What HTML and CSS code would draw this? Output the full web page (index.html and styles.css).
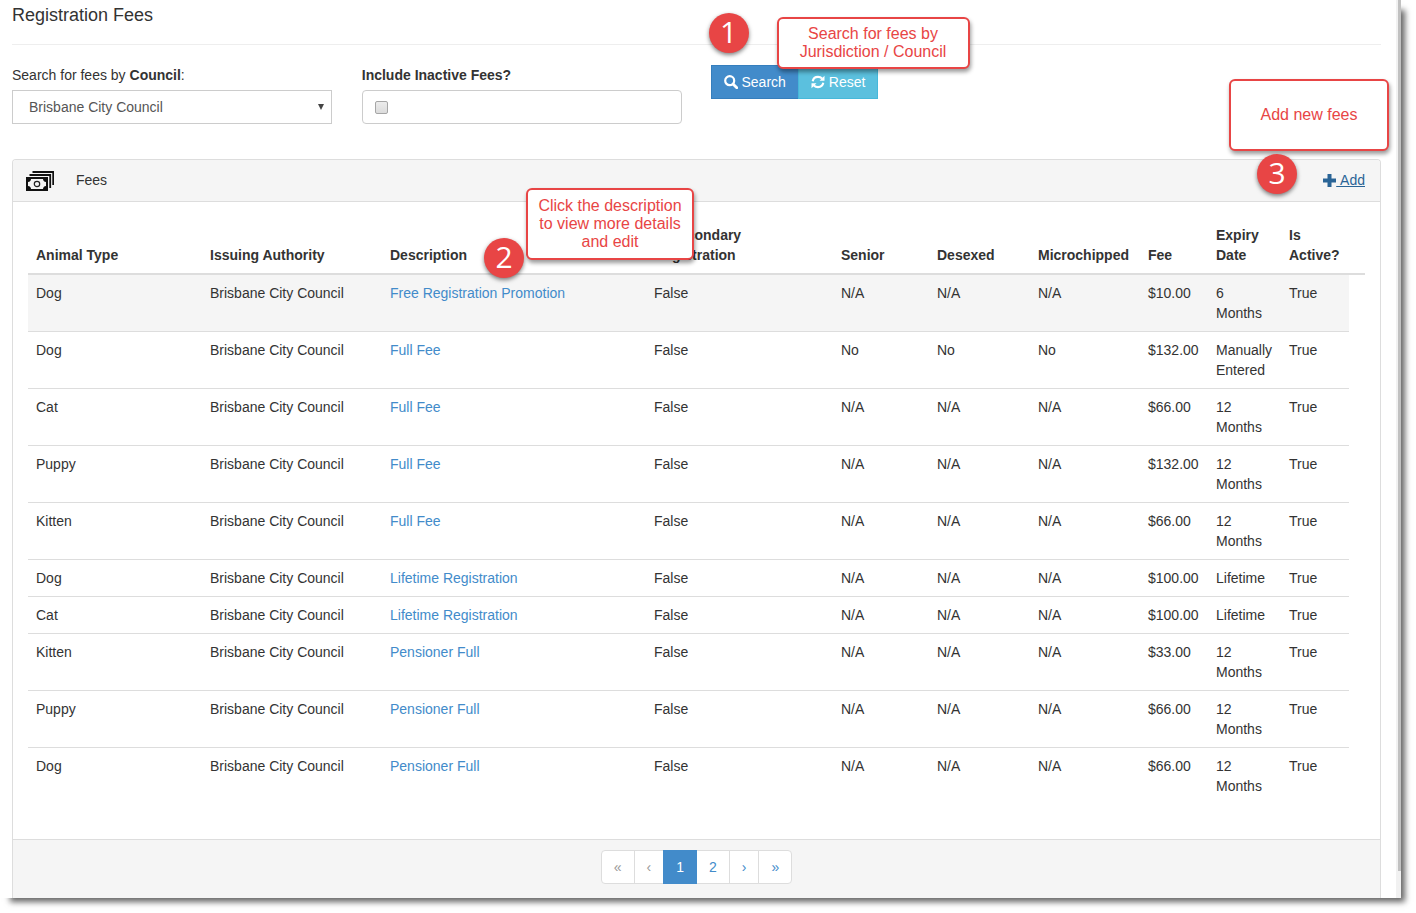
FILE: index.html
```html
<!DOCTYPE html>
<html lang="en">
<head>
<meta charset="utf-8">
<title>Registration Fees</title>
<link rel="stylesheet" href="styles.css">
</head>
<body>
<div class="frame">
  <main class="content">
    <h1 class="title">Registration Fees</h1>
    <form class="filters">
      <div class="field">
        <label class="field-label" for="council">Search for fees by <b>Council</b>:</label>
        <div class="select-wrap">
          <select class="select" id="council"><option>Brisbane City Council</option></select>
          <svg class="select-arrow" width="6" height="6" viewBox="0 0 6 6" aria-hidden="true"><path d="M0 0h6L3 6z" fill="#444"/></svg>
        </div>
      </div>
      <div class="field">
        <label class="field-label" for="inactive"><b>Include Inactive Fees?</b></label>
        <div class="check-box"><input class="check" type="checkbox" id="inactive"></div>
      </div>
      <div class="actions">
        <button class="btn btn-search" type="button"><svg class="btn-icon" width="14" height="14" viewBox="0 0 14 14" aria-hidden="true"><circle cx="5.7" cy="5.7" r="4.5" fill="none" stroke="#fff" stroke-width="2.2"/><path d="M9 9l3.8 3.8" stroke="#fff" stroke-width="2.8" stroke-linecap="round"/></svg>Search</button>
        <button class="btn btn-reset" type="button"><svg class="btn-icon" width="14" height="14" viewBox="0 0 14 14" aria-hidden="true"><path d="M1.7 6.2C2.2 3.6 4.3 1.9 7 1.9c1.7 0 3 .6 4.1 1.7M12.3 7.8c-.5 2.6-2.6 4.3-5.3 4.3-1.7 0-3-.6-4.1-1.7" fill="none" stroke="#fff" stroke-width="2.1"/><path d="M13.5.8v5h-5zM.5 13.2v-5h5z" fill="#fff"/></svg>Reset</button>
        <span class="badge badge-search">1</span>
        <div class="callout callout-search">Search for fees by<br>Jurisdiction / Council</div>
      </div>
    </form>

    <section class="panel">
      <header class="panel-head">
        <svg class="money" width="28" height="20" viewBox="0 0 28 20" aria-hidden="true">
          <path d="M6.5 1h20.7v13M3.500 4h20.700v13" fill="none" stroke="#111" stroke-width="1.8"/>
          <path d="M0 6h22v14H0z" fill="#111"/>
          <path d="M5 8h12c0 1.600 1 2.800 3 3v4c-2 .2-3 1.400-3 3H5c0-1.600-1-2.800-3-3v-4c2-.2 3-1.400 3-3z" fill="#f5f5f5"/>
          <circle cx="11" cy="13" r="2.700" fill="none" stroke="#222" stroke-width="1.200"/>
        </svg>
        <span class="panel-title">Fees</span>
        <a class="add" href="#"><svg class="plus" width="13" height="13" viewBox="0 0 13 13" aria-hidden="true"><path d="M4.500 0h4v4.500H13v4H8.500V13h-4V8.500H0v-4h4.500z" fill="#2a6496"/></svg><span class="add-text">&nbsp;Add</span></a>
        <span class="badge badge-add">3</span>
        <div class="callout callout-add">Add new fees</div>
      </header>
      <div class="panel-body">
        <table class="fees">
          <colgroup><col class="c-animal"><col class="c-authority"><col class="c-desc"><col class="c-secondary"><col class="c-senior"><col class="c-desexed"><col class="c-chip"><col class="c-fee"><col class="c-expiry"><col class="c-active"><col class="c-gutter"></colgroup>
          <thead>
            <tr><th>Animal Type</th><th>Issuing Authority</th><th class="th-desc">Description<span class="badge badge-desc">2</span><div class="callout callout-desc">Click the description<br>to view more details<br>and edit</div></th><th>Is Secondary<br>Registration</th><th>Senior</th><th>Desexed</th><th>Microchipped</th><th>Fee</th><th>Expiry Date</th><th>Is Active?</th><td class="gutter"></td></tr>
          </thead>
          <tbody>
            <tr class="hovered"><td>Dog</td><td>Brisbane City Council</td><td><a href="#">Free Registration Promotion</a></td><td>False</td><td>N/A</td><td>N/A</td><td>N/A</td><td>$10.00</td><td>6<br>Months</td><td>True</td></tr>
            <tr><td>Dog</td><td>Brisbane City Council</td><td><a href="#">Full Fee</a></td><td>False</td><td>No</td><td>No</td><td>No</td><td>$132.00</td><td>Manually Entered</td><td>True</td></tr>
            <tr><td>Cat</td><td>Brisbane City Council</td><td><a href="#">Full Fee</a></td><td>False</td><td>N/A</td><td>N/A</td><td>N/A</td><td>$66.00</td><td>12<br>Months</td><td>True</td></tr>
            <tr><td>Puppy</td><td>Brisbane City Council</td><td><a href="#">Full Fee</a></td><td>False</td><td>N/A</td><td>N/A</td><td>N/A</td><td>$132.00</td><td>12<br>Months</td><td>True</td></tr>
            <tr><td>Kitten</td><td>Brisbane City Council</td><td><a href="#">Full Fee</a></td><td>False</td><td>N/A</td><td>N/A</td><td>N/A</td><td>$66.00</td><td>12<br>Months</td><td>True</td></tr>
            <tr><td>Dog</td><td>Brisbane City Council</td><td><a href="#">Lifetime Registration</a></td><td>False</td><td>N/A</td><td>N/A</td><td>N/A</td><td>$100.00</td><td>Lifetime</td><td>True</td></tr>
            <tr><td>Cat</td><td>Brisbane City Council</td><td><a href="#">Lifetime Registration</a></td><td>False</td><td>N/A</td><td>N/A</td><td>N/A</td><td>$100.00</td><td>Lifetime</td><td>True</td></tr>
            <tr><td>Kitten</td><td>Brisbane City Council</td><td><a href="#">Pensioner Full</a></td><td>False</td><td>N/A</td><td>N/A</td><td>N/A</td><td>$33.00</td><td>12<br>Months</td><td>True</td></tr>
            <tr><td>Puppy</td><td>Brisbane City Council</td><td><a href="#">Pensioner Full</a></td><td>False</td><td>N/A</td><td>N/A</td><td>N/A</td><td>$66.00</td><td>12<br>Months</td><td>True</td></tr>
            <tr><td>Dog</td><td>Brisbane City Council</td><td><a href="#">Pensioner Full</a></td><td>False</td><td>N/A</td><td>N/A</td><td>N/A</td><td>$66.00</td><td>12<br>Months</td><td>True</td></tr>
          </tbody>
        </table>
      </div>
      <footer class="panel-foot">
        <nav class="pager" aria-label="Pages">
          <a class="page off" href="#">«</a>
          <a class="page off" href="#">‹</a>
          <a class="page current" href="#" aria-current="page">1</a>
          <a class="page" href="#">2</a>
          <a class="page" href="#">›</a>
          <a class="page" href="#">»</a>
        </nav>
      </footer>
    </section>
  </main>
  <div class="track"><div class="thumb"></div></div>
</div>
</body>
</html>
```

FILE: styles.css
```css
* { box-sizing: border-box; }

body {
  margin: 0;
  background: #fff;
  color: #333;
  font: 14px/20px "Liberation Sans", Arial, sans-serif;
}

a { color: #428bca; text-decoration: none; }

.frame {
  display: flex;
  margin: 0 15px 15px 0;
  background: #fff;
  box-shadow: 7px 7px 6px -3px rgba(0, 0, 0, .6);
}

.content { flex: 1; min-width: 0; padding: 0 15px 0 12px; }

.track { display: flex; flex-direction: column; width: 5px; padding: 0 0 27px 2px; background: #f1f1f1; }
.thumb { flex: 1; background: #c1c1c1; }

.title {
  margin: 0 0 20px;
  padding: 5px 0 19px;
  border-bottom: 1px solid #eee;
  font-size: 18px;
  line-height: 20px;
  font-weight: 400;
}

/* Filters */
.filters { display: grid; grid-template-columns: repeat(4, 1fr); gap: 30px; margin-bottom: 35px; }
.field-label { display: block; margin-bottom: 5px; }

.select-wrap { display: grid; align-items: center; }
.select {
  grid-area: 1 / 1;
  appearance: none;
  width: 100%;
  height: 34px;
  padding: 0 16px;
  border: 1px solid #ccc;
  border-radius: 0;
  background: #fff;
  color: #555;
  font: inherit;
}
.select-arrow { grid-area: 1 / 1; justify-self: end; margin-right: 8px; pointer-events: none; }

.check-box {
  display: flex;
  align-items: center;
  height: 34px;
  padding: 0 12px;
  border: 1px solid #ccc;
  border-radius: 4px;
}
.check {
  appearance: none;
  width: 13px;
  height: 13px;
  margin: 0;
  border: 1px solid #a6a6a6;
  border-radius: 2px;
  background: linear-gradient(#ececec, #dcdcdc);
}
.check:checked { background: #428bca; }

.actions { position: relative; display: flex; align-items: flex-start; }
.btn {
  display: flex;
  align-items: center;
  gap: 4px;
  height: 34px;
  padding: 0 12px;
  border: 1px solid;
  color: #fff;
  font: inherit;
  white-space: nowrap;
}
.btn-search { margin-left: -1px; background: #428bca; border-color: #357ebd; }
.btn-reset { margin-left: -1px; background: #5bc0de; border-color: #46b8da; }

/* Numbered annotations */
.badge {
  position: absolute;
  z-index: 2;
  width: 40px;
  height: 40px;
  border-radius: 50%;
  background: #e84545;
  box-shadow: 0 2px 4px rgba(0, 0, 0, .5);
  color: #fff;
  font: 400 30px/38px "Open Sans", "Noto Sans", sans-serif;
  text-align: center;
}
.callout {
  position: absolute;
  z-index: 1;
  display: flex;
  align-items: center;
  justify-content: center;
  border: 2px solid #e84545;
  border-radius: 6px;
  background: #fff;
  box-shadow: 1px 3px 4px rgba(0, 0, 0, .4);
  color: #e84545;
  font-size: 16px;
  font-weight: 400;
  line-height: 18px;
  text-align: center;
  white-space: nowrap;
}
.badge-search { left: -3px; top: -52px; }
.callout-search { left: 65px; top: -48px; width: 193px; height: 52px; }
.badge-desc { left: 102px; top: 21px; }
.callout-desc { left: 144px; top: -29px; width: 168px; height: 72px; }
.badge-add { right: 83px; top: -6px; }
.callout-add { right: -9px; top: -81px; width: 160px; height: 72px; }

/* Panel */
.panel { border: 1px solid #ddd; border-bottom: 0; border-radius: 4px 4px 0 0; }
.panel-head {
  position: relative;
  display: flex;
  align-items: center;
  padding: 10px 15px 10px 13px;
  border-bottom: 1px solid #ddd;
  border-radius: 3px 3px 0 0;
  background: #f5f5f5;
  line-height: 21px;
}
.money { margin-right: 22px; }
.add { display: flex; align-items: center; margin-left: auto; color: #2a6496; }
.add-text { text-decoration: underline; }
.panel-body { padding: 15px 15px 35px; }

.fees { width: 100%; table-layout: fixed; border-collapse: separate; border-spacing: 0; }
.fees th, .fees td { padding: 8px; text-align: left; vertical-align: top; }
.fees thead th, .fees thead td { border-bottom: 2px solid #ddd; vertical-align: bottom; }
.fees tbody td { border-bottom: 1px solid #ddd; }
.fees tbody tr:last-child td { border-bottom: 0; }
.fees .hovered td { background: #f5f5f5; }
.fees .gutter { padding: 0; }
.th-desc { position: relative; }

.c-animal { width: 174px; }
.c-authority { width: 180px; }
.c-desc { width: 264px; }
.c-secondary { width: 187px; }
.c-senior { width: 96px; }
.c-desexed { width: 101px; }
.c-chip { width: 110px; }
.c-fee { width: 68px; }
.c-expiry { width: 73px; }
.c-active { width: 68px; }
.c-gutter { width: 16px; }

.panel-foot { display: flex; justify-content: center; padding: 10px 15px 14px; border-top: 1px solid #ddd; background: #f5f5f5; }
.pager { display: flex; }
.page {
  margin-left: -1px;
  padding: 6px 12px;
  border: 1px solid #ddd;
  background: #fff;
}
.page:first-child { margin-left: 0; border-radius: 4px 0 0 4px; }
.page:last-child { border-radius: 0 4px 4px 0; }
.page.off { color: #999; }
.page.current { z-index: 1; border-color: #428bca; background: #428bca; color: #fff; }
```
